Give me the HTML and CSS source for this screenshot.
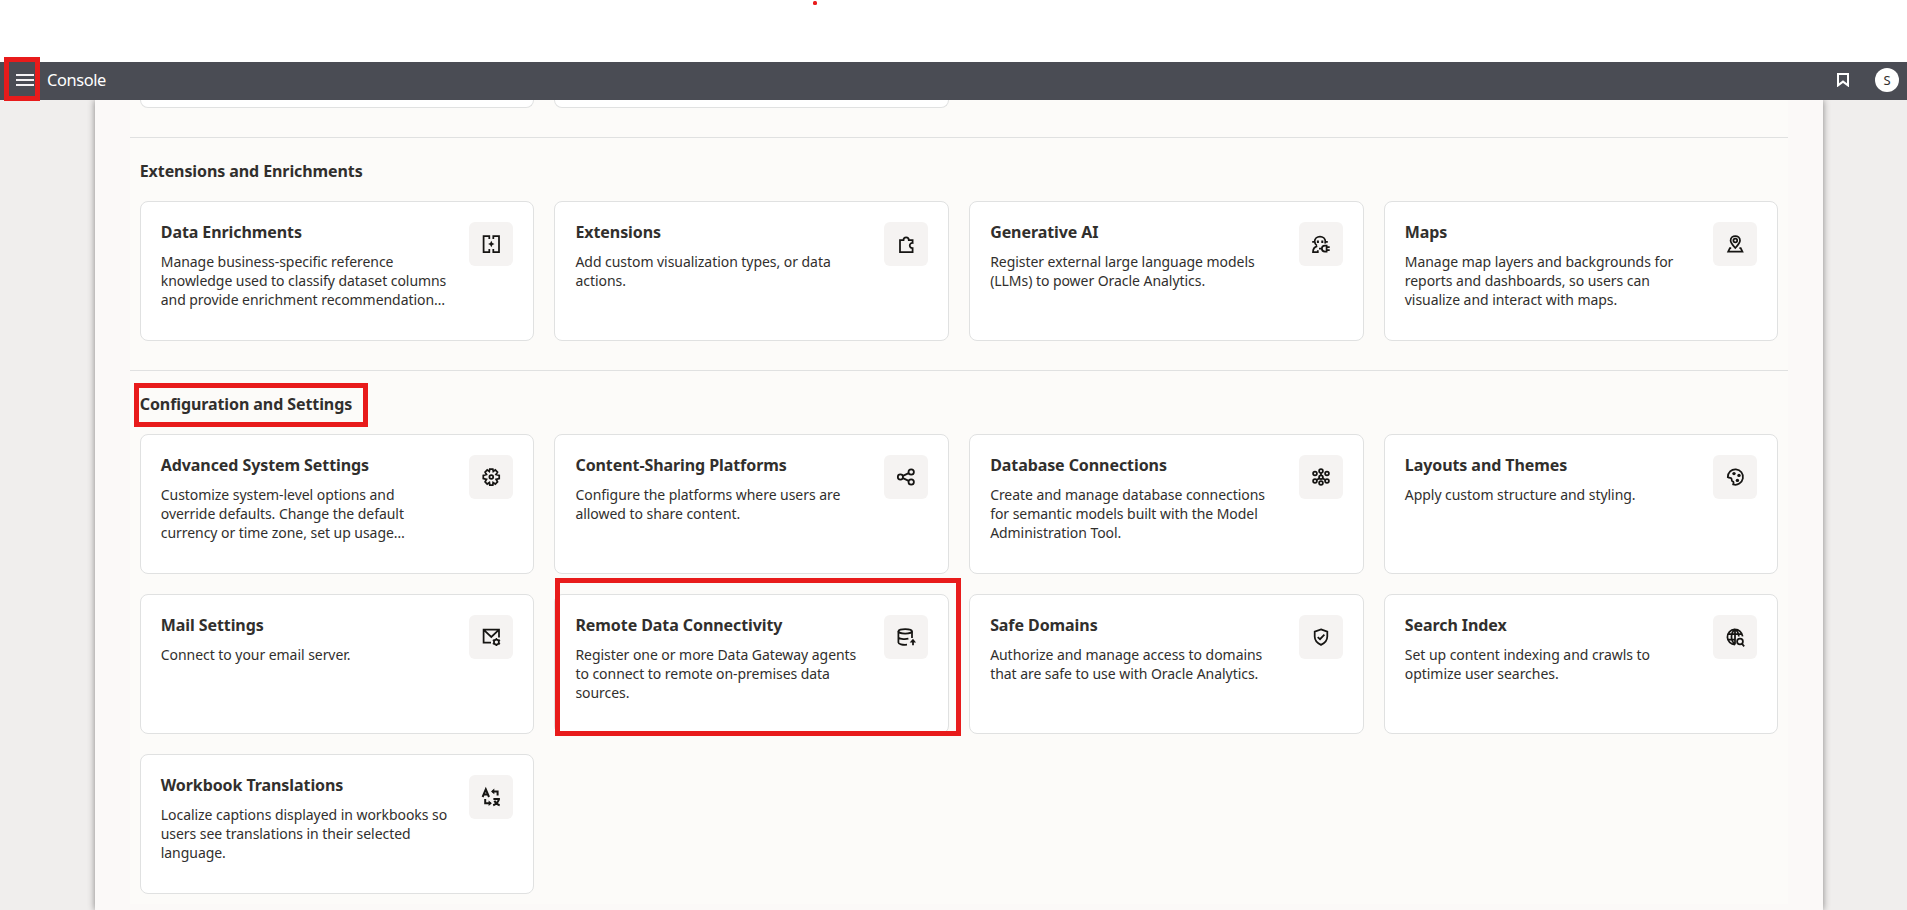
FILE: index.html
```html
<!DOCTYPE html>
<html lang="en">
<head>
<meta charset="utf-8">
<title>Console</title>
<link rel="stylesheet" href="styles.css">
</head>
<body>
<div class="top-space"><span class="dot"></span></div>
<header class="bar">
  <div class="menu"><i></i><i></i><i></i><span class="mark mark-menu"></span></div>
  <h1>Console</h1>
  <svg class="bookmark" viewBox="0 0 12 14"><path d="M1 1H11V12.4L6 8.6L1 12.4Z"/></svg>
  <div class="avatar">S</div>
</header>
<main>
  <div class="panel">
    <div class="sections">
      <section class="cut"><div class="grid"><article class="card stub"></article><article class="card stub"></article></div></section>
      <section>
        <h2>Extensions and Enrichments</h2>
        <div class="grid">
          <article class="card"><div class="copy"><h3>Data Enrichments</h3><p>Manage business-specific reference<br>knowledge used to classify dataset columns<br>and provide enrichment recommendation…</p></div>
            <div class="icon"><svg viewBox="0 0 20 20"><path d="M8.3 5V2H2.6V18H8.3V15M12.3 5V2H18V18H12.3V15"/><path class="fill" d="M10.3 6.8L11.4 8.9L13.5 10L11.4 11.1L10.3 13.2L9.2 11.1L7.1 10L9.2 8.9Z"/></svg></div></article>
          <article class="card"><div class="copy"><h3>Extensions</h3><p>Add custom visualization types, or data<br>actions.</p></div>
            <div class="icon"><svg viewBox="0 0 20 20"><path d="M4 6H7.5C7.5 2.5 12.8 2.5 12.8 6H16.6V9C12.8 8.8 12.8 14.4 16.6 14.2V18H4Z"/></svg></div></article>
          <article class="card"><div class="copy"><h3>Generative AI</h3><p>Register external large language models<br>(LLMs) to power Oracle Analytics.</p></div>
            <div class="icon"><svg viewBox="0 0 20 20"><path d="M1.2 7.8H3.6C3.6 .9 14.4 .9 14.4 7.8H16.8M3.8 7.8C3.8 9.6 4.5 10.8 5.8 11.6M14.2 7.8V9.5M6.3 12.2C3.3 13 2 15 2 18H6.8V16.2M8 14.6H10.8M15.6 11.6H14C9.8 11.6 9.8 17.6 14 17.6H15.6ZM15.8 13.2H18.7M15.8 16H18.7"/><path class="thick" d="M6.9 6.5V9M11.3 6.5V9"/></svg></div></article>
          <article class="card"><div class="copy"><h3>Maps</h3><p>Manage map layers and backgrounds for<br>reports and dashboards, so users can<br>visualize and interact with maps.</p></div>
            <div class="icon"><svg viewBox="0 0 20 20"><path d="M10.3 14C7.4 10.7 5.6 8.8 5.6 6.4C5.6 .6 15 .6 15 6.4C15 8.8 13.2 10.7 10.3 14ZM6.2 14.2H4.9L3.2 17.7H17.4L15.7 14.2H14.4"/><circle cx="10.3" cy="6.5" r="1.9"/></svg></div></article>
        </div>
      </section>
      <section>
        <h2>Configuration and Settings<span class="mark mark-heading"></span></h2>
        <div class="grid">
          <article class="card"><div class="copy"><h3>Advanced System Settings</h3><p>Customize system-level options and<br>override defaults. Change the default<br>currency or time zone, set up usage…</p></div>
            <div class="icon"><svg viewBox="0 0 20 20"><path d="M8.8 2H11.8L12.3 4.4L14.3 2.9L16.5 5.1L15 7.5L18.2 8.5V11.5L15.1 12.3L16.5 14.8L14.3 17L12.1 15.5L11.8 18H8.8L8.4 15.5L6.2 17L4.1 14.8L5.5 12.4L2.3 11.5V8.5L5.5 7.5L4.1 5.1L6.2 2.9L8.3 4.4Z"/><circle cx="10.3" cy="10" r="1.9"/></svg></div></article>
          <article class="card"><div class="copy"><h3>Content-Sharing Platforms</h3><p>Configure the platforms where users are<br>allowed to share content.</p></div>
            <div class="icon"><svg viewBox="0 0 20 20"><circle cx="4.4" cy="10" r="2.6"/><circle cx="15.2" cy="5" r="2.7"/><circle cx="15.2" cy="15" r="2.7"/><path d="M6.9 8.9L12.7 6.1M6.9 11.1L12.7 13.9"/></svg></div></article>
          <article class="card"><div class="copy"><h3>Database Connections</h3><p>Create and manage database connections<br>for semantic models built with the Model<br>Administration Tool.</p></div>
            <div class="icon"><svg viewBox="0 0 20 20"><circle cx="10" cy="4.1" r="1.9"/><circle cx="10" cy="10.3" r="1.9"/><circle cx="10" cy="16" r="1.9"/><circle cx="4" cy="6.4" r="1.9"/><circle cx="16" cy="6.4" r="1.9"/><circle cx="4" cy="14" r="1.9"/><circle cx="16" cy="14" r="1.9"/><path d="M10 6V8.4M8.4 11.2L5.6 13M11.6 11.2L14.4 13"/></svg></div></article>
          <article class="card"><div class="copy"><h3>Layouts and Themes</h3><p>Apply custom structure and styling.</p></div>
            <div class="icon"><svg viewBox="0 0 20 20"><path d="M2.8 10.3A7.6 7.7 0 1 1 8.2 17.4C8.8 15.6 8.6 14.4 7.6 14.3C6.4 14.2 6.8 12.9 6.6 11.8C6.4 10.7 4.8 11.3 2.8 10.3Z"/><circle class="fill" cx="9" cy="6.6" r="1.7"/><circle class="fill" cx="14" cy="8.4" r="1.7"/><circle class="fill" cx="12.4" cy="13.4" r="1.7"/></svg></div></article>
          <article class="card"><div class="copy"><h3>Mail Settings</h3><p>Connect to your email server.</p></div>
            <div class="icon"><svg viewBox="0 0 20 20"><path d="M10 15.6H2.6V2.6H18V10.5M2.8 2.8L10.3 10L17.8 2.8"/><circle cx="15.4" cy="15" r="2.5"/><path class="spokes" d="M15.4 12.3V11M15.4 17.7V19M12.9 13.6L11.8 12.9M17.9 13.6L19 12.9M12.9 16.4L11.8 17.1M17.9 16.4L19 17.1"/></svg></div></article>
          <article class="card"><div class="copy"><h3>Remote Data Connectivity</h3><p>Register one or more Data Gateway agents<br>to connect to remote on-premises data<br>sources.</p></div>
            <div class="icon"><svg viewBox="0 0 20 20"><ellipse cx="9.2" cy="4.3" rx="6.8" ry="2.3"/><path d="M2.4 4.3V15.5C2.4 17 6.4 18.1 11 17.7M16 4.3V11M2.4 9.9C2.4 11.8 8.2 12.6 12.4 11.7M17 18.3V13.5"/><path class="fill" d="M13.7 15.5L17 11.7L20 15.5Z"/></svg></div><span class="mark mark-card"></span></article>
          <article class="card"><div class="copy"><h3>Safe Domains</h3><p>Authorize and manage access to domains<br>that are safe to use with Oracle Analytics.</p></div>
            <div class="icon"><svg viewBox="0 0 20 20"><path d="M10 2.4L16.3 4.6V9.5C16.3 13.4 14 16 10 17.9C6 16 3.7 13.4 3.7 9.5V4.6ZM6.7 10.2L9 12.2L13.4 7.7"/></svg></div></article>
          <article class="card"><div class="copy"><h3>Search Index</h3><p>Set up content indexing and crawls to<br>optimize user searches.</p></div>
            <div class="icon"><svg viewBox="0 0 20 20"><path d="M10 17.6A7.6 7.6 0 1 1 17.6 9.4M10 17.4C5.3 13.6 5.3 6 10 2.4C13 4.6 13.8 7 13.8 9.4M10 2.4V17.4M3.3 7H16.8M3.3 12.6H10.6M17 16.9L19.2 19.3"/><circle cx="15" cy="14.4" r="2.9"/></svg></div></article>
          <article class="card"><div class="copy"><h3>Workbook Translations</h3><p>Localize captions displayed in workbooks so<br>users see translations in their selected<br>language.</p></div>
            <div class="icon"><svg viewBox="0 0 20 20"><path class="thick" d="M1.6 10L4.8 2.3L8 10M2.8 7.6H6.8M11.3 4.4H16.6V8.6M4.2 12V16.2H9.5M12.4 12H18.9M18 12.3C16.8 15.3 15 17.3 12.2 18.2M13.4 13.8C14.6 16.2 16.3 17.7 18.7 18.2"/><path class="fill" d="M13.3 1.6V7.2L10 4.4ZM7.6 13.4V19L10.9 16.2Z"/></svg></div></article>
        </div>
      </section>
    </div>
  </div>
</main>
</body>
</html>
```

FILE: styles.css
```css
* { box-sizing: border-box; }
body { margin: 0; height: 910px; overflow: hidden; background: #fff; color: #312f2d; font-family: "Noto Sans", "Open Sans", sans-serif; }
h1, h2, h3, p { margin: 0; }
.top-space { height: 62px; position: relative; }
.dot { position: absolute; left: 813px; top: 1px; width: 4px; height: 4px; border-radius: 1.5px; background: #e81b1b; }
.bar { height: 38px; background: #4a4c54; display: flex; align-items: center; padding: 0 8px 2px 16px; color: #fff; }
.menu { position: relative; width: 18px; height: 12px; display: flex; flex-direction: column; justify-content: space-between; }
.menu i { height: 2px; background: #f5f3f5; }
h1 { margin-left: 13px; font-size: 16.4px; line-height: 24px; font-weight: 400; letter-spacing: -.4px; }
.bookmark { width: 12px; height: 14px; margin-left: auto; fill: none; stroke: #fff; stroke-width: 2; }
.avatar { width: 24px; height: 24px; margin-left: 26px; border-radius: 50%; background: #fff; color: #312f2d; font-size: 13px; line-height: 25px; text-align: center; }
main { height: 810px; overflow: hidden; background: #f0eeed; }
.panel { width: 1728px; height: 810px; margin-left: 95px; padding: 0 35px; background: #fbf9f8; box-shadow: 0 0 7px rgba(0, 0, 0, .45); }
.sections { height: 804px; background: #fcfbf9; }
section { padding: 0 9.7px 0 9.75px; border-top: 1px solid #e0e1e1; height: 233px; }
section.cut { height: 37px; border: 0; }
h2 { position: relative; height: 63px; padding-top: 21px; font-size: 16px; line-height: 24px; font-weight: 700; letter-spacing: -.09px; white-space: nowrap; }
.grid { display: grid; grid-template-columns: repeat(4, 394.4px); column-gap: 20.3px; row-gap: 20px; }
.card { position: relative; height: 140px; display: flex; justify-content: space-between; padding: 20px; border: 1px solid #e0e1e1; border-radius: 8px; background: #fff; }
.stub { height: 8px; padding: 0; border-top: 0; border-radius: 0 0 8px 8px; }
.copy { white-space: nowrap; width: 0; }
h3 { margin-top: -1px; font-size: 16px; line-height: 22px; font-weight: 700; letter-spacing: -.08px; }
p { margin-top: 9px; font-size: 14px; line-height: 19px; letter-spacing: -.05px; }
.icon { flex: none; width: 44px; height: 44px; padding: 12px; border-radius: 6px; background: #f5f3f2; }
.icon svg { display: block; width: 20px; height: 20px; fill: none; stroke: #161513; stroke-width: 1.75; overflow: visible; }
.icon .fill { fill: #161513; stroke: none; }
.icon .thick { stroke-width: 2; }
.icon .spokes { stroke-width: 1.4; }
.mark { position: absolute; z-index: 2; border: 5px solid #e81b1b; pointer-events: none; }
.mark-menu { left: -12px; top: -17px; width: 36px; height: 44px; }
.mark-heading { left: -6px; top: 12px; width: 234px; height: 44px; }
.mark-card { left: 0; top: -17px; width: 406px; height: 158px; }
```
